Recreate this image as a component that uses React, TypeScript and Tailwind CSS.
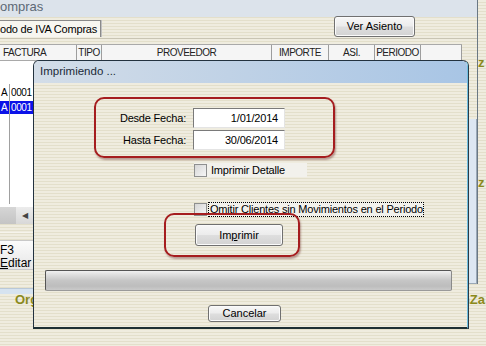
import React from 'react';

const stripes =
  'bg-[image:repeating-linear-gradient(180deg,#efecdf_0px,#efecdf_2px,#e3dfcb_2px,#e3dfcb_3px)]';

const btn =
  'border border-[#707070] rounded-[3px] bg-[linear-gradient(180deg,#f7f7f7_0%,#ececec_48%,#dedede_52%,#d3d3d3_100%)] shadow-[inset_0_0_0_1px_#fbfbfb] text-[11px] leading-none text-black flex items-center justify-center';

function Checkbox() {
  return (
    <div className="w-[13px] h-[13px] border border-[#8e8f8f] bg-[linear-gradient(135deg,#d6d6d6,#f6f6f6)] shrink-0" />
  );
}

function DateField({ label, value }: { label: string; value: string }) {
  return (
    <div className="flex items-center h-[20px]">
      <div className="w-[153px] text-right pr-[1px] tracking-[-0.2px]">{label}</div>
      <div className="ml-[6px] w-[92px] h-[20px] bg-white border-t border-l border-[#7a7a7a] border-b border-r border-b-[#e4e4e4] border-r-[#e4e4e4] flex items-center justify-end pr-[6px] tracking-[-0.2px]">
        {value}
      </div>
    </div>
  );
}

const columns = [
  { label: 'FACTURA', w: 'w-[77px]', align: 'justify-start pl-[3px]' },
  { label: 'TIPO', w: 'w-[25px]', align: 'justify-center' },
  { label: 'PROVEEDOR', w: 'w-[170px]', align: 'justify-center' },
  { label: 'IMPORTE', w: 'w-[57px]', align: 'justify-center' },
  { label: 'ASI.', w: 'w-[46px]', align: 'justify-center' },
  { label: 'PERIODO', w: 'w-[46px]', align: 'justify-center' },
  { label: '', w: 'w-[41px]', align: 'justify-center' },
];

export default function App() {
  return (
    <div
      className={`relative w-[486px] h-[346px] overflow-hidden flex flex-col font-['Liberation_Sans',Arial,sans-serif] text-[11px] text-black ${stripes}`}
    >
      <div className="flex">
        {/* main window behind the dialog */}
        <div className="w-[478px] flex flex-col border-r border-[#6a7884]">
          <div className="h-[17px] bg-[#dce3eb] text-[13px] leading-[14px] text-[#5d6976]">ompras</div>

          <div className="h-[21px] flex items-start justify-between">
            <div className="mt-[3px] h-[17px] w-[101px] bg-[#f7f6f0] border-t border-r border-[#8a8a8a] shadow-[1px_0_0_#c0c0c0] leading-[17px] tracking-[-0.2px] whitespace-nowrap">
              odo de IVA Compras
            </div>
            <div className={`${btn} -mt-[1px] mr-[62px] w-[81px] h-[21px]`}>Ver Asiento</div>
          </div>

          <div className="h-px bg-[#c9c5b4]" />

          <div className="flex h-[245px]">
            <div className="w-[467px] flex flex-col">
              <div className="h-[5px]" />
              {/* grid header */}
              <div className="h-[17px] flex bg-[#f5f5f5] border-t border-b border-[#a9a9a9] w-[462px]">
                {columns.map((c) => (
                  <div
                    key={c.label + c.w}
                    className={`${c.w} flex items-center ${c.align} border-r border-[#9d9d9d] text-[10px] tracking-[-0.5px] text-[#222]`}
                  >
                    {c.label}
                  </div>
                ))}
              </div>
              {/* grid body */}
              <div className="h-[146px] bg-white flex flex-col">
                <div className="h-[23px]" />
                <div className="h-[17px] flex text-[10px] tracking-[-0.4px] items-center">
                  <div className="w-[10px] h-full border-r border-[#a0a0a0] flex items-center pl-[1px]">A</div>
                  <div className="pl-[1px]">0001</div>
                </div>
                <div className="h-[13px] flex text-[10px] tracking-[-0.4px] items-center bg-[#0b12e8] text-white">
                  <div className="w-[10px] h-full border-r border-[#a0a0a0] flex items-center pl-[1px]">A</div>
                  <div className="pl-[1px]">0001</div>
                </div>
                <div className="flex-1 flex">
                  <div className="w-[10px] h-[90px] border-r border-[#a0a0a0]" />
                </div>
              </div>
              {/* horizontal scrollbar */}
              <div className="h-[17px] flex bg-[#cfcfcf]">
                <div className="w-[16px] bg-[linear-gradient(180deg,#d6d6d6,#c4c4c4)]" />
                <div className="w-[17px] bg-[linear-gradient(180deg,#ececec,#d8d8d8)] flex items-center justify-center text-[8px] text-[#444]">
                  ◀
                </div>
              </div>
              <div className="h-[8px]" />
              <div className="h-px bg-[#f6f4ec]" />
              <div className="h-[7px]" />
              <div className="h-[30px] w-[40px] bg-[linear-gradient(180deg,#fbfbfb,#e6e6e6)] border-t border-b border-[#c8c8c8] flex flex-col text-[12px] leading-[13px] pt-[3px]">
                <span>F3</span>
                <span>
                  <span className="underline">E</span>ditar
                </span>
              </div>
            </div>
            <div className="w-[10px] flex flex-col">
              <div className="h-[80px]" />
              <div className="flex-1 bg-[#dde7f2] border-l-2 border-l-[#2b3946] border-r border-r-[#9aa8b6] border-b border-b-[#9aa8b6]" />
            </div>
          </div>
        </div>

        {/* right edge of background */}
        <div className="w-[8px] flex flex-col text-[13px] font-bold text-[#8b8a1d] leading-[12px]">
          <div className="h-[57px]" />
          <span>z</span>
          <div className="h-[108px]" />
          <span>z</span>
        </div>
      </div>

      {/* bottom strip of background */}
      <div className="h-[4px]" />
      <div className="h-[6px] w-[466px] bg-[#d6e3f0] border-t border-[#b9c8d8]" />
      <div className="flex items-start justify-between h-[14px] text-[13px] leading-[12px] font-bold text-[#8b8a1d]">
        <span className="pl-[15px]">Orga</span>
        <span className="pr-[1px]">nZa</span>
      </div>

      {/* dialog */}
      <div className="absolute left-[33px] top-[60px] w-[435px] h-[269px] flex flex-col border border-[#23323f] border-r-[#6fbfe0] border-b-2 border-b-[#1d2f33] rounded-t-[6px] overflow-hidden shadow-[1px_0_0_#2b3a46]">
        <div className="h-[22px] bg-[linear-gradient(90deg,#d3dde8_0%,#c0d2e6_45%,#a8c5e5_100%)] flex items-center pl-[6px] text-[11.5px] text-[#1b2a38]">
          Imprimiendo ...
        </div>
        <div className={`relative flex-1 flex flex-col ${stripes}`}>
          <div className="h-[25px]" />
          <DateField label="Desde Fecha:" value="1/01/2014" />
          <div className="h-[2px]" />
          <DateField label="Hasta Fecha:" value="30/06/2014" />

          <div className="h-[13px]" />
          <div className="ml-[160px] w-[113px] h-[14px] bg-[#f2f1ec] flex items-center">
            <Checkbox />
            <span className="ml-[4px] tracking-[-0.2px]">Imprimir Detalle</span>
          </div>

          <div className="h-[25px]" />
          <div className="ml-[160px] h-[15px] flex items-center">
            <Checkbox />
            <span className="ml-[1px] w-[216px] h-[15px] bg-[#f2f1ec] border border-dotted border-black flex items-center pl-[1px] tracking-[-0.2px] whitespace-nowrap">
              Omitir Clientes sin Movimientos en el Periodo
            </span>
          </div>

          <div className="h-[7px]" />
          <div className={`${btn} ml-[161px] w-[88px] h-[22px]`}>
            <span>
              Im<span className="underline">p</span>rimir
            </span>
          </div>

          <div className="h-[24px]" />
          <div className="ml-[11px] w-[407px] h-[21px] border-t border-l border-[#555] border-b border-r border-b-[#9a9a9a] border-r-[#8a8a8a] rounded-[2px] bg-[linear-gradient(180deg,#f0f0f0_0%,#dadada_25%,#c6c6c6_50%,#bdbdbd_80%,#cacaca_100%)]" />

          <div className="h-[14px]" />
          <div className={`${btn} ml-[174px] w-[73px] h-[17px]`}>Cancelar</div>

          {/* red annotation outlines */}
          <div className="absolute left-[60px] top-[14px] w-[241px] h-[61px] border-2 border-[#a51d1f] rounded-[10px] shadow-[1px_2px_2px_rgba(80,0,0,0.35)]" />
          <div className="absolute left-[130px] top-[130px] w-[136px] h-[44px] border-2 border-[#a51d1f] rounded-[10px] shadow-[1px_2px_2px_rgba(80,0,0,0.35)]" />
        </div>
      </div>
    </div>
  );
}
